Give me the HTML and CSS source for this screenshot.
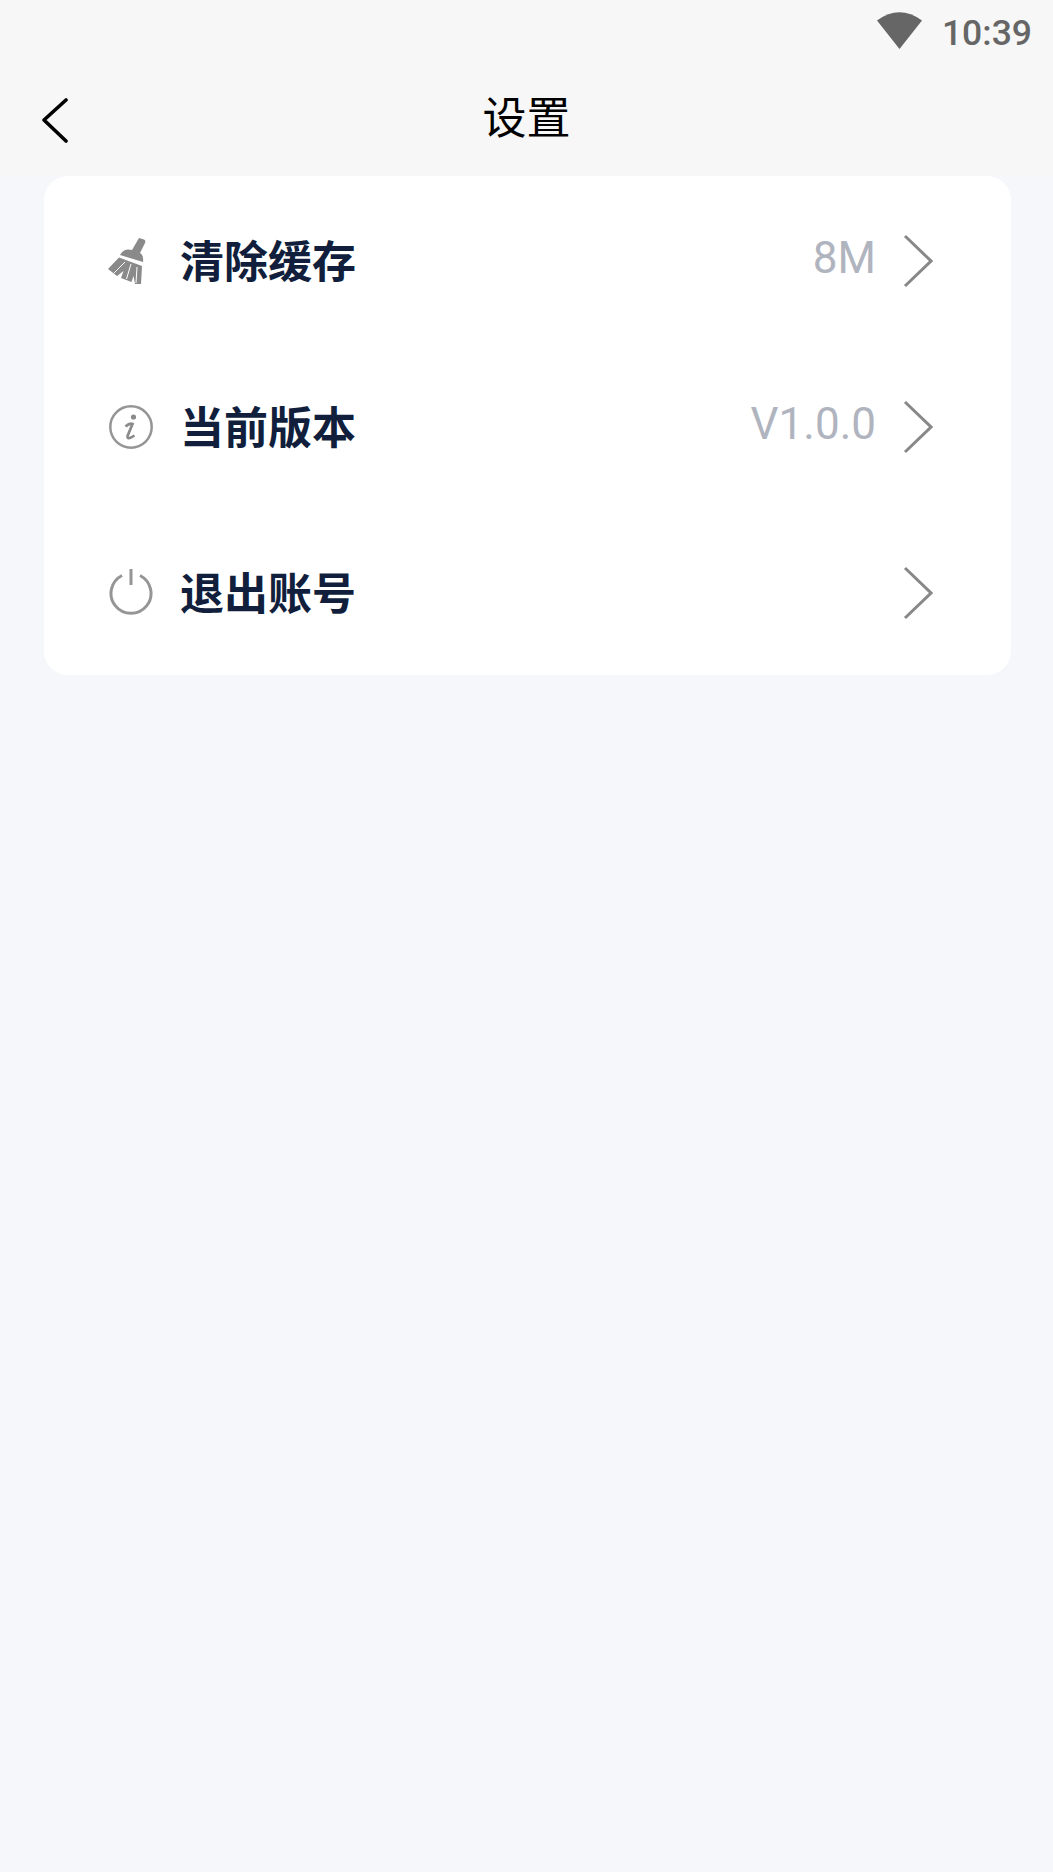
FILE: index.html
```html
<!DOCTYPE html>
<html lang="zh-CN">
<head>
<meta charset="utf-8">
<title>设置</title>
<link rel="stylesheet" href="styles.css">
</head>
<body>
<div class="top">
  <div class="status">
    <svg class="wifi" width="45" height="37" viewBox="0 0 45 37"><path d="M0 8.500Q22.500-8 45 8.500L22.500 37Z" fill="#666"/></svg>
    <span class="time">10:39</span>
  </div>
  <header class="nav">
    <svg class="back" width="28" height="46" viewBox="0 0 28 46"><path d="M25 3 3 23 25 44" fill="none" stroke="#000" stroke-width="3.600" stroke-linecap="round" stroke-linejoin="round"/></svg>
    <h1 class="title">设置</h1>
  </header>
</div>
<main class="card">
  <div class="row">
    <span class="icon">
      <svg class="broom" width="38" height="47" viewBox="0 0 38 47"><path d="M31 1 36 2.500Q38 3.500 37 6L32 16 24 13Z M12 18Q16 11 24 13L32 16Q36 18 35 25Z M11 20.500 34 29 33 47 27 47 25.500 39 23.500 45 13 41 15.500 34 9 39 0 32Z" fill="#8a8a8a"/><path d="M23 27 18.500 42M29 30 28 46M17 25 6 36" stroke="#fff" stroke-width="1" fill="none"/></svg>
    </span>
    <span class="label">清除缓存</span>
    <span class="value">8M</span>
    <svg class="arrow" width="30" height="54" viewBox="0 0 30 54"><path d="M2 2 28 27 2 52" fill="none" stroke="#888" stroke-width="3"/></svg>
  </div>
  <div class="row">
    <span class="icon">
      <svg width="44" height="44" viewBox="0 0 44 44"><circle cx="22" cy="22" r="20.700" fill="none" stroke="#959595" stroke-width="2.500"/><circle cx="24.500" cy="12" r="2.600" fill="#8a8a8a"/><path d="M16.500 21.500Q21 17.500 23.500 19L18.500 31Q18 35.500 25.500 30.500" fill="none" stroke="#8a8a8a" stroke-width="2.700"/></svg>
    </span>
    <span class="label">当前版本</span>
    <span class="value">V1.0.0</span>
    <svg class="arrow" width="30" height="54" viewBox="0 0 30 54"><path d="M2 2 28 27 2 52" fill="none" stroke="#888" stroke-width="3"/></svg>
  </div>
  <div class="row">
    <span class="icon">
      <svg width="44" height="47" viewBox="0 0 44 47"><path d="M31 6.500A20 20 0 1 1 13 6.500" fill="none" stroke="#959595" stroke-width="3"/><path d="M22 0V16" stroke="#959595" stroke-width="3" fill="none"/></svg>
    </span>
    <span class="label">退出账号</span>
    <svg class="arrow" width="30" height="54" viewBox="0 0 30 54"><path d="M2 2 28 27 2 52" fill="none" stroke="#888" stroke-width="3"/></svg>
  </div>
</main>
</body>
</html>
```

FILE: styles.css
```css
* { box-sizing: border-box; }
html, body { margin: 0; padding: 0; }
body {
  width: 1053px;
  min-height: 1872px;
  background: #f6f7fb;
  font-family: "Noto Sans CJK SC", "Roboto", sans-serif;
}
.top {
  height: 176px;
  background: #f7f7f7;
}
.status {
  height: 60px;
  padding: 13px 21px 0 0;
  display: flex;
  justify-content: flex-end;
  align-items: flex-start;
  gap: 20px;
}
.wifi {
  margin-top: -1px;
}
.time {
  font-family: "Roboto", sans-serif;
  font-weight: 500;
  font-size: 35.500px;
  line-height: 40px;
  color: #666;
}
.nav {
  height: 116px;
  position: relative;
  display: flex;
  justify-content: center;
  padding-top: 21px;
}
.back {
  position: absolute;
  left: 41px;
  top: 37px;
}
.title {
  margin: 0;
  font-size: 44px;
  font-weight: 400;
  line-height: 68px;
  color: #000;
}
.card {
  margin: 0 42px 0 44px;
  height: 499px;
  padding-top: 1px;
  background: #fff;
  border-radius: 24px;
}
.row {
  height: 166px;
  display: flex;
  align-items: center;
  padding: 0 78px 0 65px;
}
.icon {
  width: 71px;
  display: flex;
  align-items: center;
  padding-top: 1px;
}
.broom {
  margin-left: -1px;
  margin-right: 1px;
}
.label {
  font-size: 44px;
  font-weight: 700;
  line-height: 60px;
  color: #111f3d;
  flex: 1;
  margin-top: -3px;
}
.value {
  font-family: "Roboto", sans-serif;
  font-size: 44px;
  line-height: 60px;
  color: #b0b4bf;
  margin: -4px 27px 0 0;
}
.arrow {
  margin-top: 1px;
}
```
